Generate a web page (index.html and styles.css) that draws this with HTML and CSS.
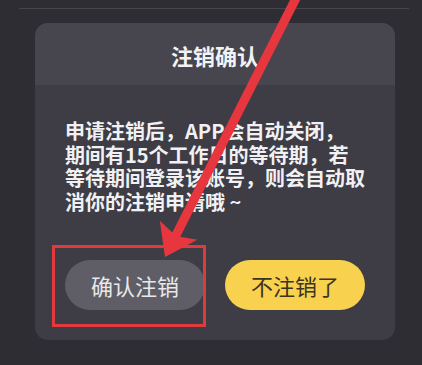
FILE: index.html
```html
<!DOCTYPE html>
<html lang="zh-CN">
<head>
<meta charset="utf-8">
<title>注销确认</title>
<link rel="stylesheet" href="styles.css">
</head>
<body>
<div class="page">
  <div class="rule"></div>
  <section class="dialog">
    <header class="dialog-head">注销确认</header>
    <div class="dialog-body">
      <p class="message">申请注销后，APP会自动关闭，<br>期间有15个工作日的等待期，若<br>等待期间登录该账号，则会自动取<br>消你的注销申请哦 ~</p>
      <div class="actions">
        <button class="btn btn-confirm">确认注销</button>
        <button class="btn btn-cancel">不注销了</button>
      </div>
    </div>
  </section>
  <svg class="annotation" width="422" height="365" viewBox="0 0 422 365" aria-hidden="true">
    <rect x="53.5" y="246.5" width="151" height="79" fill="none" stroke="#e13a3d" stroke-width="3"/>
    <polygon fill="#e8363f" points="165,257 197.3,239.8 180.3,236.8 304.1,-7.9 296.1,-12.1 172.3,232.6 159.8,220.7"/>
  </svg>
</div>
</body>
</html>
```

FILE: styles.css
```css
* { box-sizing: border-box; }
html, body {
  margin: 0;
  padding: 0;
}
body {
  background: #2e2d33;
  font-family: "Noto Sans CJK SC", "Noto Sans", sans-serif;
  width: 422px;
  height: 365px;
  overflow: hidden;
}
.page {
  position: relative;
  padding-top: 8px;
  height: 365px;
}
.rule {
  height: 1px;
  margin: 0 13px 0 19px;
  background: #46454c;
}
.dialog {
  margin: 14px 27px 0 35px;
  width: 360px;
  border-radius: 13px;
  overflow: hidden;
  background: #3e3d45;
}
.dialog-head {
  height: 62px;
  display: flex;
  align-items: center;
  justify-content: center;
  background: #47464e;
  color: #f3f3f5;
  font-size: 22px;
  font-weight: 700;
  padding-top: 2px;
}
.dialog-body {
  padding: 34px 30px 30px;
}
.message {
  margin: 0;
  font-size: 20px;
  line-height: 23.5px;
  font-weight: 700;
  color: #f1f1f3;
  white-space: nowrap;
}
.actions {
  margin-top: 47px;
  display: grid;
  grid-template-columns: 1fr 1fr;
  gap: 20px;
}
.btn {
  height: 50px;
  border: none;
  border-radius: 25px;
  font-family: inherit;
  font-size: 22px;
  font-weight: 400;
  padding: 0;
}
.btn-confirm {
  background: #5f5e67;
  color: #e8e8ea;
}
.btn-cancel {
  background: #f8d24f;
  color: #3b3421;
}
.annotation {
  position: absolute;
  left: 0;
  top: 0;
}
```
